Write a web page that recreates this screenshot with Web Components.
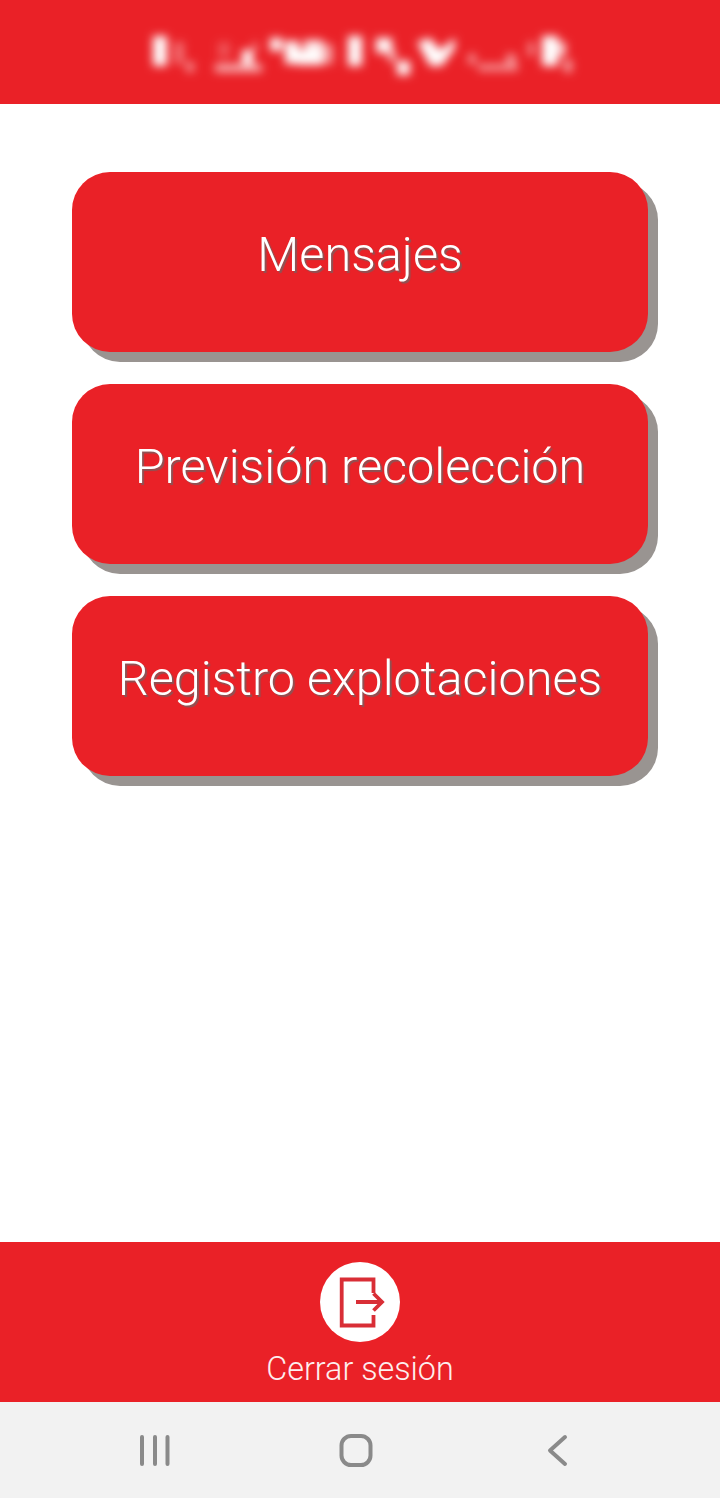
<!DOCTYPE html>
<html lang="es">
<head>
<meta charset="utf-8">
<title>Menú</title>
<style>
    html, body { margin: 0; padding: 0; background: #fff; }
</style>
</head>
<body>
<app-shell>
    <app-header slot="header"></app-header>
    <menu-button>Mensajes</menu-button>
    <menu-button>Previsión recolección</menu-button>
    <menu-button>Registro explotaciones</menu-button>
    <logout-bar slot="footer">Cerrar sesión</logout-bar>
    <nav-bar slot="nav"></nav-bar>
</app-shell>

<script>
class AppShell extends HTMLElement {
    connectedCallback() {
        this.attachShadow({ mode: 'open' });
        this.shadowRoot.innerHTML = `
            <style>
                :host {
                    display: flex;
                    flex-direction: column;
                    width: 720px;
                    height: 1498px;
                    overflow: hidden;
                    font-family: Roboto, "Liberation Sans", sans-serif;
                }
                main {
                    flex: 1;
                    display: flex;
                    flex-direction: column;
                    gap: 32px;
                    padding: 68px 72px 0;
                }
            </style>
            <slot name="header"></slot>
            <main><slot></slot></main>
            <slot name="footer"></slot>
            <slot name="nav"></slot>
        `;
    }
}

// the title in the reference is blurred out, so it is drawn as a blurred shape
class AppHeader extends HTMLElement {
    connectedCallback() {
        this.attachShadow({ mode: 'open' });
        this.shadowRoot.innerHTML = `
            <style>
                :host {
                    display: block;
                    height: 104px;
                    background: #ea2127;
                }
                svg { display: block; }
            </style>
            <svg width="720" height="104" viewBox="0 0 720 104" aria-hidden="true">
                <defs><filter id="b" x="-20%" y="-40%" width="140%" height="180%"><feGaussianBlur stdDeviation="4.6"/></filter></defs>
                <g fill="#fff" filter="url(#b)">
                    <rect x="153" y="36" width="14" height="30"/>
                    <rect x="174" y="42" width="10" height="22" opacity=".35"/>
                    <rect x="186" y="62" width="8" height="10" opacity=".5"/>
                    <rect x="215" y="64" width="47" height="8" opacity=".65"/>
                    <rect x="218" y="42" width="12" height="16" opacity=".22"/>
                    <rect x="242" y="50" width="11" height="14"/>
                    <rect x="252" y="42" width="6" height="10" opacity=".35"/>
                    <rect x="270" y="38" width="12" height="13"/>
                    <rect x="285" y="41" width="14" height="23"/>
                    <rect x="297" y="50" width="26" height="15"/>
                    <rect x="304" y="40" width="19" height="12" opacity=".9"/>
                    <rect x="321" y="44" width="12" height="20" opacity=".55"/>
                    <rect x="348" y="36" width="14" height="30"/>
                    <rect x="376" y="38" width="16" height="15"/>
                    <rect x="388" y="50" width="8" height="12" opacity=".65"/>
                    <rect x="397" y="61" width="13" height="14"/>
                    <path d="M417 42l13-4 10 12 15-12v10l-13 18h-12z"/>
                    <rect x="468" y="54" width="8" height="10" opacity=".5"/>
                    <rect x="478" y="64" width="40" height="7" opacity=".5"/>
                    <rect x="506" y="54" width="10" height="10" opacity=".5"/>
                    <rect x="528" y="42" width="6" height="14" opacity=".5"/>
                    <rect x="542" y="36" width="16" height="30"/>
                    <rect x="558" y="42" width="8" height="14" opacity=".75"/>
                    <rect x="564" y="60" width="8" height="12" opacity=".6"/>
                </g>
            </svg>
        `;
    }
}

class MenuButton extends HTMLElement {
    connectedCallback() {
        this.attachShadow({ mode: 'open' });
        this.shadowRoot.innerHTML = `
            <style>
                :host {
                    display: flex;
                    align-items: center;
                    justify-content: center;
                    height: 180px;
                    box-sizing: border-box;
                    padding-bottom: 14px;
                    border-radius: 38px;
                    background: #ea2127;
                    box-shadow: 10px 10px 0 #999491;
                    color: #fff;
                    font-weight: 300;
                    font-size: 48.6px;
                    line-height: 1;
                    white-space: nowrap;
                    text-shadow: 2px 2px 1px rgba(110, 100, 100, .75);
                }
            </style>
            <slot></slot>
        `;
    }
}

class LogoutBar extends HTMLElement {
    connectedCallback() {
        this.attachShadow({ mode: 'open' });
        this.shadowRoot.innerHTML = `
            <style>
                :host {
                    display: flex;
                    flex-direction: column;
                    align-items: center;
                    height: 160px;
                    box-sizing: border-box;
                    padding-top: 20px;
                    background: #ea2127;
                    color: #fdeeee;
                    font-weight: 300;
                    font-size: 32.3px;
                    line-height: 38px;
                }
                .circle {
                    width: 80px;
                    height: 80px;
                    border-radius: 50%;
                    background: #fff;
                    margin-bottom: 8px;
                }
                svg { display: block; }
            </style>
            <div class="circle">
                <svg width="80" height="80" viewBox="0 0 80 80" fill="none" stroke="#d92e36" stroke-width="3.8">
                    <path d="M53.5 31V17.5H21.7V63.5H53.5V53"/>
                    <path d="M36 40H62M53.5 31.5L62 40L53.5 48.5"/>
                </svg>
            </div>
            <slot></slot>
        `;
    }
}

class NavBar extends HTMLElement {
    connectedCallback() {
        this.attachShadow({ mode: 'open' });
        this.shadowRoot.innerHTML = `
            <style>
                :host {
                    display: flex;
                    align-items: center;
                    justify-content: center;
                    gap: 161px;
                    height: 96px;
                    padding-right: 8px;
                    box-sizing: border-box;
                    background: #f2f2f2;
                }
                svg { display: block; }
            </style>
            <svg width="40" height="40" viewBox="0 0 40 40" fill="none" stroke="#8a8a8a" stroke-width="4" stroke-linecap="round">
                <path d="M7 7V34M20 7V34M32.5 7V34"/>
            </svg>
            <svg width="40" height="40" viewBox="0 0 40 40" fill="none" stroke="#8a8a8a" stroke-width="4">
                <rect x="5.5" y="6" width="29" height="29" rx="9.5"/>
            </svg>
            <svg width="40" height="40" viewBox="0 0 40 40" fill="none" stroke="#8a8a8a" stroke-width="4" stroke-linecap="round" stroke-linejoin="round">
                <path d="M28 7L13 20.5L28 34"/>
            </svg>
        `;
    }
}

customElements.define('app-shell', AppShell);
customElements.define('app-header', AppHeader);
customElements.define('menu-button', MenuButton);
customElements.define('logout-bar', LogoutBar);
customElements.define('nav-bar', NavBar);
</script>
</body>
</html>
